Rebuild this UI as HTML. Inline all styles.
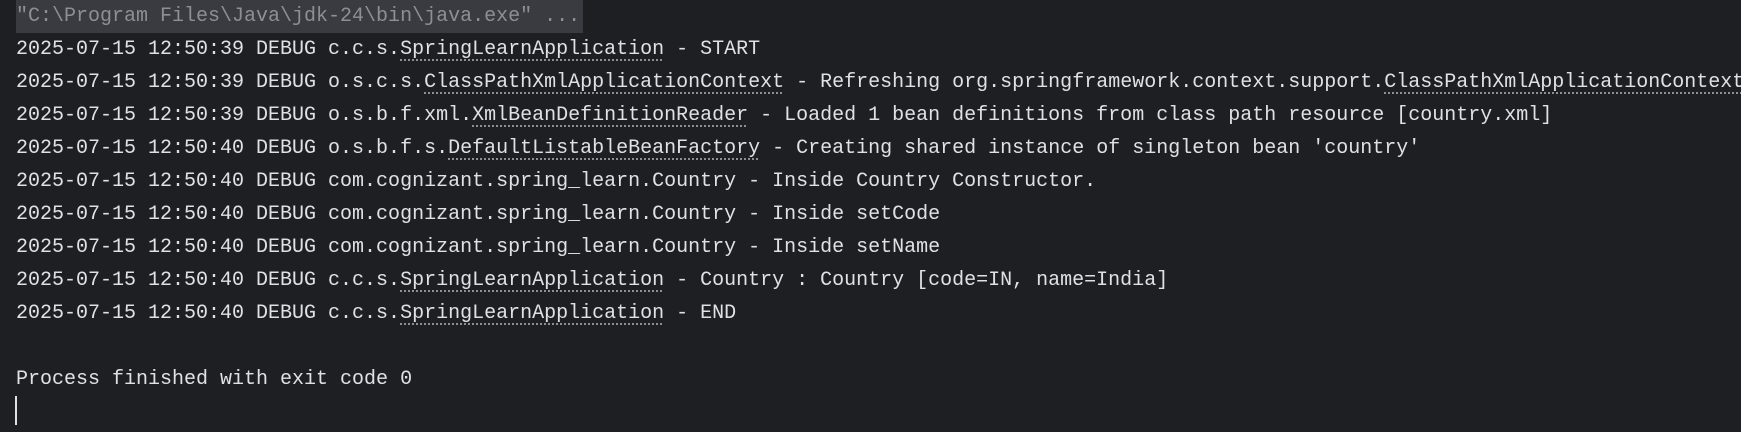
<!DOCTYPE html>
<html><head><meta charset="utf-8"><style>
html,body{margin:0;padding:0;background:#1e1f22;width:1741px;height:432px;overflow:hidden}
.c{position:absolute;left:16px;top:0;font-family:"Liberation Mono",monospace;font-size:20px;color:#dfe1e5}
.l{height:33px;line-height:33px;white-space:pre}
.h{display:inline-block;background:#393b40;color:#8c8f94;padding-right:3px;height:33px}
.u{text-decoration:underline dotted #8c8f94;text-underline-offset:5px}
.cur{position:absolute;left:15px;top:396px;width:2px;height:29px;background:#dfe1e5}
</style></head><body>
<div class="c"><div class="l"><span class="h">"C:\Program Files\Java\jdk-24\bin\java.exe" ...</span></div><div class="l">2025-07-15 12:50:39 DEBUG c.c.s.<span class="u">SpringLearnApplication</span> - START</div><div class="l">2025-07-15 12:50:39 DEBUG o.s.c.s.<span class="u">ClassPathXmlApplicationContext</span> - Refreshing org.springframework.context.support.<span class="u">ClassPathXmlApplicationContext</span></div><div class="l">2025-07-15 12:50:39 DEBUG o.s.b.f.xml.<span class="u">XmlBeanDefinitionReader</span> - Loaded 1 bean definitions from class path resource [country.xml]</div><div class="l">2025-07-15 12:50:40 DEBUG o.s.b.f.s.<span class="u">DefaultListableBeanFactory</span> - Creating shared instance of singleton bean 'country'</div><div class="l">2025-07-15 12:50:40 DEBUG com.cognizant.spring_learn.Country - Inside Country Constructor.</div><div class="l">2025-07-15 12:50:40 DEBUG com.cognizant.spring_learn.Country - Inside setCode</div><div class="l">2025-07-15 12:50:40 DEBUG com.cognizant.spring_learn.Country - Inside setName</div><div class="l">2025-07-15 12:50:40 DEBUG c.c.s.<span class="u">SpringLearnApplication</span> - Country : Country [code=IN, name=India]</div><div class="l">2025-07-15 12:50:40 DEBUG c.c.s.<span class="u">SpringLearnApplication</span> - END</div><div class="l"> </div><div class="l">Process finished with exit code 0</div></div>
<div class="cur"></div>
</body></html>
